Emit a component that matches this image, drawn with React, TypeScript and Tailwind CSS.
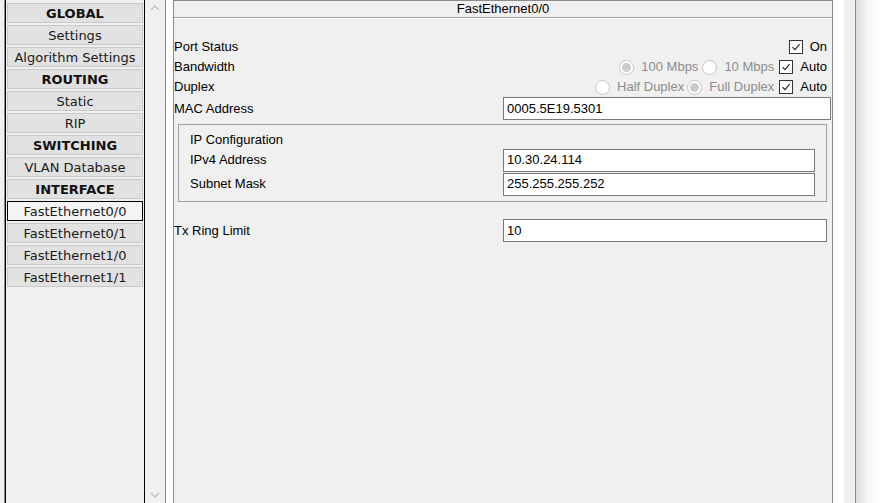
import React from "react";

const navItems = [
  { label: "GLOBAL", head: true },
  { label: "Settings" },
  { label: "Algorithm Settings" },
  { label: "ROUTING", head: true },
  { label: "Static" },
  { label: "RIP" },
  { label: "SWITCHING", head: true },
  { label: "VLAN Database" },
  { label: "INTERFACE", head: true },
  { label: "FastEthernet0/0", active: true },
  { label: "FastEthernet0/1" },
  { label: "FastEthernet1/0" },
  { label: "FastEthernet1/1" },
];

const Checkbox = () => (
  <span className="flex h-[14px] w-[14px] items-center justify-center border border-[#333] bg-white">
    <svg width="10" height="10" viewBox="0 0 10 10">
      <path d="M1.5 5.2 L4 7.6 L8.6 2.2" fill="none" stroke="#222" strokeWidth="1.1" />
    </svg>
  </span>
);

const Radio = ({ checked }: { checked?: boolean }) => (
  <span className="flex h-[15px] w-[15px] items-center justify-center rounded-full border border-[#c4c4c4] bg-white">
    {checked && <span className="h-[9px] w-[9px] rounded-full bg-[#cccccc]" />}
  </span>
);

const Field = ({ value, className }: { value: string; className: string }) => (
  <div className={`flex h-[23px] items-center border border-[#7a7a7a] bg-white pl-[3px] ${className}`}>
    {value}
  </div>
);

export default function App() {
  return (
    <div
      className="flex h-[503px] w-[880px] overflow-hidden bg-[#f0f0f0] text-[13px] text-black"
      style={{ fontFamily: '"Liberation Sans", Arial, sans-serif' }}
    >
      {/* left navigation list */}
      <div className="ml-[4px] flex h-full border-l border-[#8a8a8a]">
        <div
          className="flex w-[140px] flex-col gap-[2px] border-x border-black pl-[1px] pt-[3px]"
          style={{ fontFamily: '"DejaVu Sans", Verdana, sans-serif' }}
        >
          {navItems.map((it) => (
            <div
              key={it.label}
              className={`flex h-[20px] w-[136px] items-center justify-center border leading-none ${
                it.active
                  ? "border-black bg-[#f5f5f5]"
                  : "border-[#c9c9c9] bg-[#e1e1e1]"
              } ${it.head ? "font-bold text-[#111]" : "text-[#1a1a1a]"}`}
            >
              {it.label}
            </div>
          ))}
        </div>
        <div className="flex w-[21px] flex-col items-center justify-between border-r border-[#8a8a8a] py-[5px]">
          <svg width="10" height="6" viewBox="0 0 10 6">
            <path d="M1 5 L5 1 L9 5" fill="none" stroke="#c2c2c2" strokeWidth="1.5" />
          </svg>
          <svg width="10" height="6" viewBox="0 0 10 6">
            <path d="M1 1 L5 5 L9 1" fill="none" stroke="#c2c2c2" strokeWidth="1.5" />
          </svg>
        </div>
      </div>

      <div className="w-[7px] bg-white" />

      {/* main interface panel */}
      <div className="flex h-full w-[660px] flex-col border border-b-0 border-[#8a8a8a]">
        <div className="flex h-[17px] items-center justify-center border-b border-[#a0a0a0]">
          FastEthernet0/0
        </div>
        <div className="h-px bg-white" />

        <div className="mt-[18px] flex flex-col pr-[5px]">
          <div className="flex h-[20px] items-center justify-between">
            <span>Port Status</span>
            <div className="flex items-center gap-[7px]">
              <Checkbox />
              <span>On</span>
            </div>
          </div>
          <div className="flex h-[20px] items-center justify-between">
            <span>Bandwidth</span>
            <div className="flex items-center">
              <Radio checked />
              <span className="ml-[7px] text-[#8d8d8d]">100 Mbps</span>
              <span className="ml-[4px]">
                <Radio />
              </span>
              <span className="ml-[7px] text-[#8d8d8d]">10 Mbps</span>
              <span className="ml-[5px]">
                <Checkbox />
              </span>
              <span className="ml-[7px]">Auto</span>
            </div>
          </div>
          <div className="flex h-[20px] items-center justify-between">
            <span>Duplex</span>
            <div className="flex items-center">
              <Radio />
              <span className="ml-[7px] text-[#8d8d8d]">Half Duplex</span>
              <span className="ml-[3px]">
                <Radio checked />
              </span>
              <span className="ml-[7px] text-[#8d8d8d]">Full Duplex</span>
              <span className="ml-[5px]">
                <Checkbox />
              </span>
              <span className="ml-[7px]">Auto</span>
            </div>
          </div>
          <div className="-mr-[4px] flex h-[23px] items-center">
            <span className="w-[329px] shrink-0">MAC Address</span>
            <Field value="0005.5E19.5301" className="w-[328px] shrink-0" />
          </div>
        </div>

        <div className="ml-[4px] mr-[5px] mt-[4px] flex h-[78px] flex-col border border-[#a0a0a0] pl-[11px] pr-[11px] pt-[7px]">
          <span className="leading-[15px]">IP Configuration</span>
          <div className="mt-[1px] flex h-[24px] items-center">
            <span className="w-[313px] shrink-0">IPv4 Address</span>
            <Field value="10.30.24.114" className="flex-1" />
          </div>
          <div className="flex h-[24px] items-center">
            <span className="w-[313px] shrink-0">Subnet Mask</span>
            <Field value="255.255.255.252" className="flex-1" />
          </div>
        </div>

        <div className="mt-[17px] flex h-[23px] items-center pr-[5px]">
          <span className="w-[329px] shrink-0">Tx Ring Limit</span>
          <Field value="10" className="flex-1" />
        </div>
      </div>

      <div className="w-[11px] bg-white" />
      <div className="w-[12px] border-r border-[#8a8a8a]" />
      <div className="flex-1 bg-gradient-to-r from-[#dcdcdc] via-[#f6f6f6] to-white" />
    </div>
  );
}
